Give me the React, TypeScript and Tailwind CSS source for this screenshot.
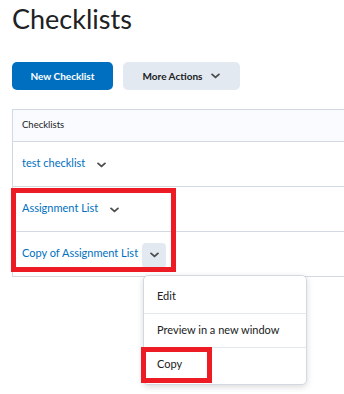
import React from "react";

function Chevron({ className = "" }: { className?: string }) {
  return (
    <svg viewBox="0 0 10 6" className={className} fill="none">
      <path d="M1.2 1.2 L5 4.6 L8.8 1.2" stroke="currentColor" strokeWidth="2" strokeLinecap="round" strokeLinejoin="round" />
    </svg>
  );
}

const ROWS = [
  { name: "test checklist", active: false },
  { name: "Assignment List", active: false },
  { name: "Copy of Assignment List", active: true },
];

export default function App() {
  return (
    <div
      className="relative w-[344px] h-[394px] overflow-hidden bg-white pl-3 text-[#202122]"
      style={{ fontFamily: "Lato, 'Noto Sans', sans-serif" }}
    >
      {/* title */}
      <h1 className="pt-[3px] text-[27px] leading-[32px] font-normal">Checklists</h1>

      {/* actions */}
      <div className="mt-[27px] flex gap-[10px]">
        <button className="h-[28px] w-[101px] rounded-[5px] bg-[#006fbf] text-[10px] font-bold text-white">
          New Checklist
        </button>
        <button className="flex h-[28px] w-[117px] items-center justify-center gap-[9px] rounded-[5px] bg-[#e3e9f1] text-[10px] font-bold text-[#202122]">
          More Actions
          <Chevron className="w-[9px] h-[6px] text-[#494c4e]" />
        </button>
      </div>

      {/* table */}
      <div className="mt-[19px] border-l border-t border-[#d3d9e3]">
        <div className="flex h-[32px] items-center border-b border-[#d3d9e3] bg-[#f9fbff] pl-[9px] text-[9.5px]">
          Checklists
        </div>
        {ROWS.map((row) => (
          <div key={row.name} className="flex h-[45px] items-center border-b border-[#d3d9e3] pl-[9px]">
            <span className="text-[11px] text-[#006fbf] -mt-[2px]">{row.name}</span>
            <span
              className={`ml-[4px] mt-[2px] flex h-[25px] w-[24px] items-center justify-center rounded-[4px] ${
                row.active ? "bg-[#e3e9f1]" : ""
              }`}
            >
              <Chevron className="w-[9px] h-[6px] text-[#494c4e]" />
            </span>
          </div>
        ))}
      </div>

      {/* highlight around last two rows */}
      <div className="absolute left-[11px] top-[188px] h-[84px] w-[165px] border-[5px] border-[#ed1c24]" />

      {/* dropdown menu */}
      <div className="absolute left-[143px] top-[275px] w-[164px] rounded-[5px] border border-[#d3d9e3] bg-white py-[3px] text-[11px] shadow-[0_2px_6px_rgba(0,0,0,0.15)]">
        <div className="flex h-[34px] items-center pl-[13px]">Edit</div>
        <div className="flex h-[34px] items-center border-t border-[#e3e9f1] pl-[13px]">Preview in a new window</div>
        <div className="flex h-[34px] items-center border-t border-[#e3e9f1] pl-[13px]">Copy</div>
      </div>

      {/* highlight around Copy */}
      <div className="absolute left-[141px] top-[347px] h-[36px] w-[71px] border-[5px] border-[#ed1c24]" />
    </div>
  );
}
